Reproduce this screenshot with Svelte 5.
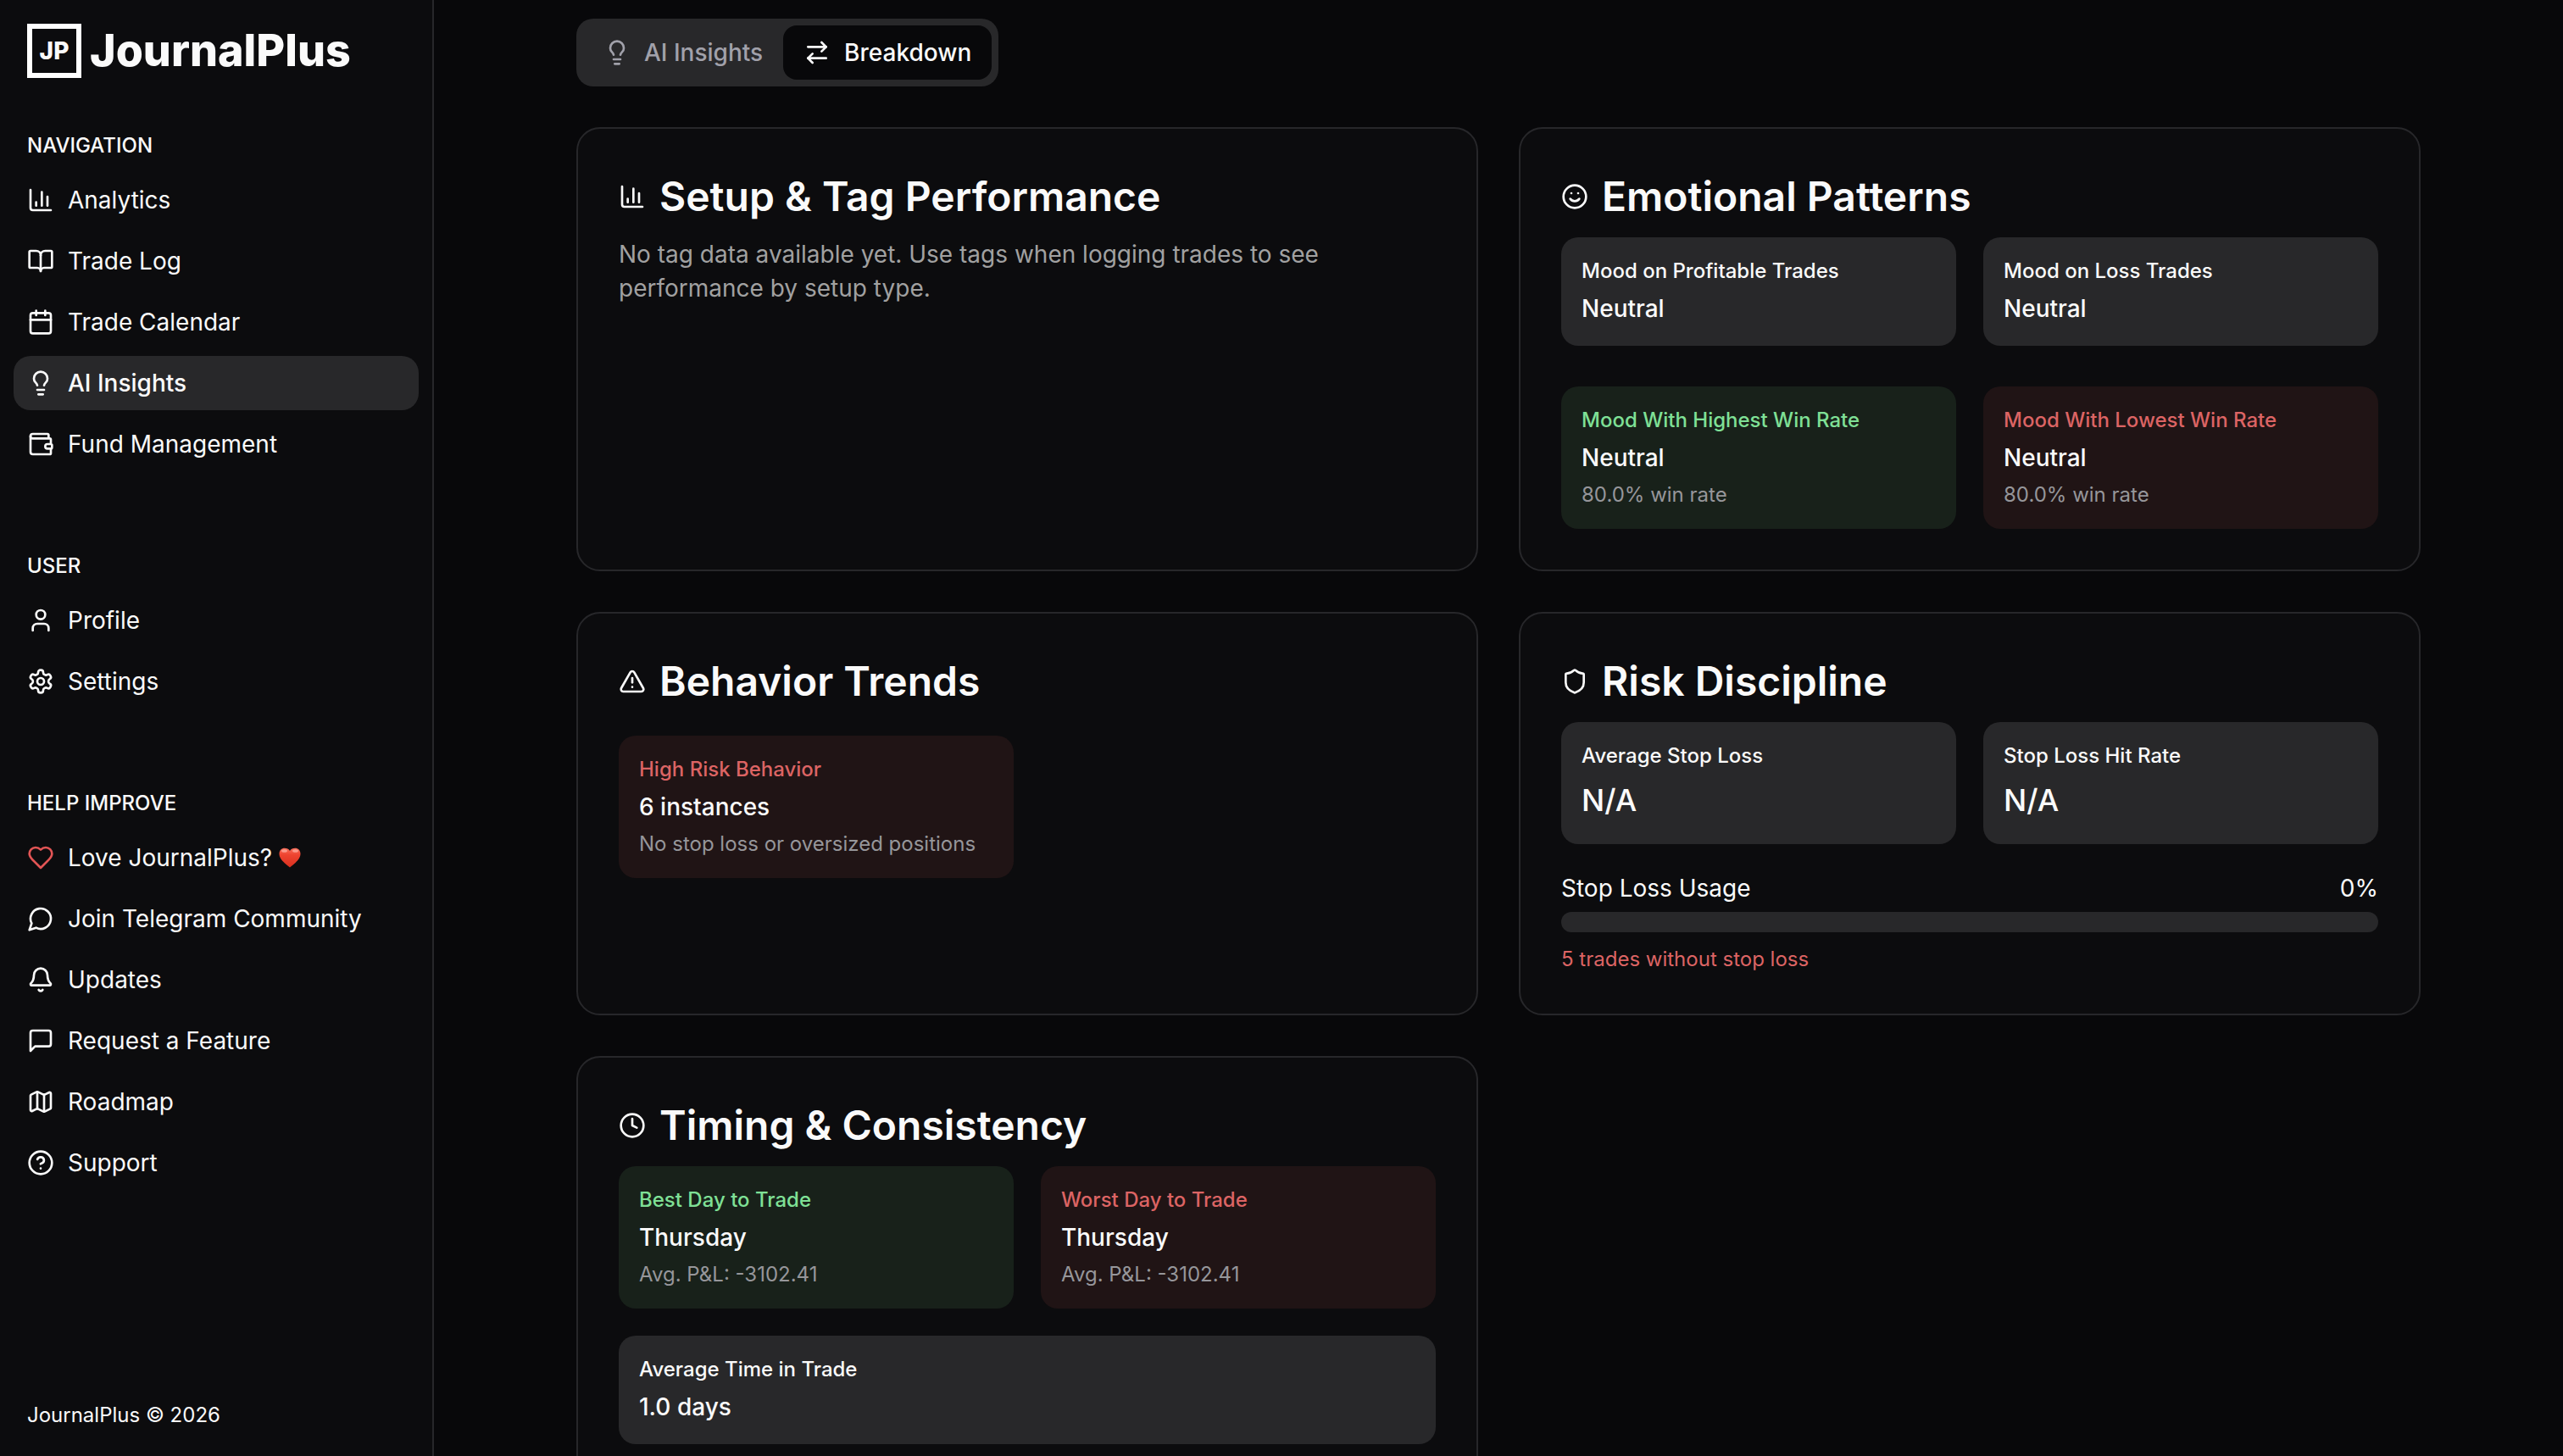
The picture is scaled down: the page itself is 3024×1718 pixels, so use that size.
<script>
  const icons = {
    chart: '<path d="M3 3v16a2 2 0 0 0 2 2h16"/><path d="M18 17V9"/><path d="M13 17V5"/><path d="M8 17v-3"/>',
    book: '<path d="M12 7v14"/><path d="M3 18a1 1 0 0 1-1-1V4a1 1 0 0 1 1-1h5a4 4 0 0 1 4 4 4 4 0 0 1 4-4h5a1 1 0 0 1 1 1v13a1 1 0 0 1-1 1h-6a3 3 0 0 0-3 3 3 3 0 0 0-3-3z"/>',
    calendar: '<path d="M8 2v4"/><path d="M16 2v4"/><rect width="18" height="18" x="3" y="4" rx="2"/><path d="M3 10h18"/>',
    bulb: '<path d="M15 14c.2-1 .7-1.7 1.5-2.5 1-.9 1.5-2.2 1.5-3.5A6 6 0 0 0 6 8c0 1 .2 2.2 1.5 3.5.7.7 1.3 1.5 1.5 2.5"/><path d="M9 18h6"/><path d="M10 22h4"/>',
    wallet: '<path d="M19 7V4a1 1 0 0 0-1-1H5a2 2 0 0 0 0 4h15a1 1 0 0 1 1 1v4h-3a2 2 0 0 0 0 4h3a1 1 0 0 0 1-1v-2a1 1 0 0 0-1-1"/><path d="M3 5v14a2 2 0 0 0 2 2h15a1 1 0 0 0 1-1v-4"/>',
    user: '<path d="M19 21v-2a4 4 0 0 0-4-4H9a4 4 0 0 0-4 4v2"/><circle cx="12" cy="7" r="4"/>',
    settings: '<path d="M12.22 2h-.44a2 2 0 0 0-2 2v.18a2 2 0 0 1-1 1.73l-.43.25a2 2 0 0 1-2 0l-.15-.08a2 2 0 0 0-2.73.73l-.22.38a2 2 0 0 0 .73 2.73l.15.1a2 2 0 0 1 1 1.72v.51a2 2 0 0 1-1 1.74l-.15.09a2 2 0 0 0-.73 2.73l.22.38a2 2 0 0 0 2.73.73l.15-.08a2 2 0 0 1 2 0l.43.25a2 2 0 0 1 1 1.73V20a2 2 0 0 0 2 2h.44a2 2 0 0 0 2-2v-.18a2 2 0 0 1 1-1.73l.43-.25a2 2 0 0 1 2 0l.15.08a2 2 0 0 0 2.73-.73l.22-.39a2 2 0 0 0-.73-2.73l-.15-.08a2 2 0 0 1-1-1.74v-.5a2 2 0 0 1 1-1.74l.15-.09a2 2 0 0 0 .73-2.73l-.22-.38a2 2 0 0 0-2.73-.73l-.15.08a2 2 0 0 1-2 0l-.43-.25a2 2 0 0 1-1-1.73V4a2 2 0 0 0-2-2z"/><circle cx="12" cy="12" r="3"/>',
    heart: '<path d="M19 14c1.49-1.46 3-3.21 3-5.5A5.5 5.5 0 0 0 16.5 3c-1.76 0-3 .5-4.5 2-1.5-1.5-2.74-2-4.5-2A5.5 5.5 0 0 0 2 8.5c0 2.3 1.5 4.05 3 5.5l7 7Z"/>',
    chat: '<path d="M7.9 20A9 9 0 1 0 4 16.1L2 22Z"/>',
    bell: '<path d="M10.268 21a2 2 0 0 0 3.464 0"/><path d="M3.262 15.326A1 1 0 0 0 4 17h16a1 1 0 0 0 .74-1.673C19.41 13.956 18 12.499 18 8A6 6 0 0 0 6 8c0 4.499-1.411 5.956-2.738 7.326"/>',
    message: '<path d="M21 15a2 2 0 0 1-2 2H7l-4 4V5a2 2 0 0 1 2-2h14a2 2 0 0 1 2 2z"/>',
    map: '<path d="M14.106 5.553a2 2 0 0 0 1.788 0l3.659-1.83A1 1 0 0 1 21 4.619v12.764a1 1 0 0 1-.553.894l-4.553 2.277a2 2 0 0 1-1.788 0l-4.212-2.106a2 2 0 0 0-1.788 0l-3.659 1.83A1 1 0 0 1 3 19.381V6.618a1 1 0 0 1 .553-.894l4.553-2.277a2 2 0 0 1 1.788 0z"/><path d="M15 5.764v15"/><path d="M9 3.236v15"/>',
    help: '<circle cx="12" cy="12" r="10"/><path d="M9.09 9a3 3 0 0 1 5.83 1c0 2-3 3-3 3"/><path d="M12 17h.01"/>',
    swap: '<path d="m16 3 4 4-4 4"/><path d="M20 7H4"/><path d="m8 21-4-4 4-4"/><path d="M4 17h16"/>',
    smile: '<circle cx="12" cy="12" r="10"/><path d="M8 14s1.5 2 4 2 4-2 4-2"/><path d="M9 9h.01"/><path d="M15 9h.01"/>',
    alert: '<path d="m21.73 18-8-14a2 2 0 0 0-3.48 0l-8 14A2 2 0 0 0 4 21h16a2 2 0 0 0 1.73-3"/><path d="M12 9v4"/><path d="M12 17h.01"/>',
    shield: '<path d="M20 13c0 5-3.5 7.5-7.66 8.95a1 1 0 0 1-.67-.01C7.5 20.5 4 18 4 13V6a1 1 0 0 1 1-1c2 0 4.5-1.2 6.24-2.72a1.17 1.17 0 0 1 1.52 0C14.51 3.81 17 5 19 5a1 1 0 0 1 1 1z"/>',
    clock: '<circle cx="12" cy="12" r="10"/><path d="M12 6v6l4 2"/>',
  };

  const sections = [
    {
      title: "NAVIGATION",
      items: [
        { icon: "chart", label: "Analytics" },
        { icon: "book", label: "Trade Log" },
        { icon: "calendar", label: "Trade Calendar" },
        { icon: "bulb", label: "AI Insights", active: true },
        { icon: "wallet", label: "Fund Management" },
      ],
    },
    {
      title: "USER",
      items: [
        { icon: "user", label: "Profile" },
        { icon: "settings", label: "Settings" },
      ],
    },
    {
      title: "HELP IMPROVE",
      items: [
        { icon: "heart", label: "Love JournalPlus?", love: true },
        { icon: "chat", label: "Join Telegram Community" },
        { icon: "bell", label: "Updates" },
        { icon: "message", label: "Request a Feature" },
        { icon: "map", label: "Roadmap" },
        { icon: "help", label: "Support" },
      ],
    },
  ];

  const tabs = [
    { id: "insights", icon: "bulb", label: "AI Insights" },
    { id: "breakdown", icon: "swap", label: "Breakdown" },
  ];

  let activeTab = $state("breakdown");
  let stopLossUsage = $state(0);
</script>

{#snippet icon(name)}
  <svg class="icon" viewBox="0 0 24 24" aria-hidden="true">{@html icons[name]}</svg>
{/snippet}

{#snippet heading(name, text)}
  <h2 class="card-title">{@render icon(name)}<span>{text}</span></h2>
{/snippet}

{#snippet stat(label, value, note = "", tone = "", large = false)}
  <div class="stat {tone}">
    <p class="stat-label">{label}</p>
    <p class="stat-value" class:large>{value}</p>
    {#if note}<p class="stat-note">{note}</p>{/if}
  </div>
{/snippet}

<div class="app">
  <aside class="sidebar">
    <a class="brand" href="/">
      <span class="brand-mark">JP</span>
      <span class="brand-name">JournalPlus</span>
    </a>

    <div class="sections">
      {#each sections as section}
        <nav class="section" aria-label={section.title}>
          <p class="section-title">{section.title}</p>
          {#each section.items as item}
            <a
              class="nav-item"
              class:active={item.active}
              class:love={item.love}
              href="#{item.icon}"
              aria-current={item.active ? "page" : undefined}
            >
              {@render icon(item.icon)}
              <span>{item.label}</span>
              {#if item.love}
                <svg class="heart" viewBox="0 0 26 24" aria-hidden="true">
                  <defs>
                    <linearGradient id="heart-fill" x1="0" y1="0" x2="0" y2="1">
                      <stop offset="0" stop-color="#f9705c" />
                      <stop offset="0.35" stop-color="#ee4430" />
                      <stop offset="1" stop-color="#d9301f" />
                    </linearGradient>
                  </defs>
                  <path
                    fill="url(#heart-fill)"
                    d="M13 23.5C9 20 .5 14.500 .5 7.500C.5 3.500 3.300 .8 6.800 .8C9.500 .8 11.800 2 13 4C14.200 2 16.500 .8 19.200 .8C22.700 .8 25.500 3.500 25.500 7.500C25.500 14.500 17 20 13 23.500Z"
                  />
                  <ellipse cx="6.500" cy="4" rx="3.500" ry="1.800" fill="#ffb3a6" opacity="0.7" />
                  <ellipse cx="19.500" cy="4" rx="3.500" ry="1.800" fill="#ffb3a6" opacity="0.7" />
                </svg>
              {/if}
            </a>
          {/each}
        </nav>
      {/each}
    </div>

    <p class="copyright">JournalPlus © 2026</p>
  </aside>

  <main class="main">
    <div class="content">
      <div class="tabs" role="tablist">
        {#each tabs as tab}
          <button
            class="tab"
            class:selected={activeTab === tab.id}
            type="button"
            role="tab"
            aria-selected={activeTab === tab.id}
            onclick={() => (activeTab = tab.id)}
          >
            {@render icon(tab.icon)}
            <span>{tab.label}</span>
          </button>
        {/each}
      </div>

      <div class="cards">
        <section class="card">
          {@render heading("chart", "Setup & Tag Performance")}
          <p class="empty">
            No tag data available yet. Use tags when logging trades to see performance by setup type.
          </p>
        </section>

        <section class="card">
          {@render heading("smile", "Emotional Patterns")}
          <div class="stats moods">
            {@render stat("Mood on Profitable Trades", "Neutral")}
            {@render stat("Mood on Loss Trades", "Neutral")}
            {@render stat("Mood With Highest Win Rate", "Neutral", "80.0% win rate", "good")}
            {@render stat("Mood With Lowest Win Rate", "Neutral", "80.0% win rate", "bad")}
          </div>
        </section>

        <section class="card">
          {@render heading("alert", "Behavior Trends")}
          <div class="stats behaviors">
            {@render stat("High Risk Behavior", "6 instances", "No stop loss or oversized positions", "bad")}
          </div>
        </section>

        <section class="card">
          {@render heading("shield", "Risk Discipline")}
          <div class="stats">
            {@render stat("Average Stop Loss", "N/A", "", "", true)}
            {@render stat("Stop Loss Hit Rate", "N/A", "", "", true)}
          </div>
          <div class="usage">
            <div class="usage-row">
              <span id="usage-label">Stop Loss Usage</span>
              <span>{stopLossUsage}%</span>
            </div>
            <div
              class="track"
              role="progressbar"
              aria-labelledby="usage-label"
              aria-valuenow={stopLossUsage}
              aria-valuemin="0"
              aria-valuemax="100"
            >
              <div class="fill" style="width: {stopLossUsage}%"></div>
            </div>
            <p class="usage-warning">5 trades without stop loss</p>
          </div>
        </section>

        <section class="card">
          {@render heading("clock", "Timing & Consistency")}
          <div class="stats">
            {@render stat("Best Day to Trade", "Thursday", "Avg. P&L: -3102.41", "good")}
            {@render stat("Worst Day to Trade", "Thursday", "Avg. P&L: -3102.41", "bad")}
            {@render stat("Average Time in Trade", "1.0 days", "", "wide")}
          </div>
        </section>
      </div>
    </div>
  </main>
</div>

<style>
  :global(body) {
    background: #08080a;
  }

  .app {
    --page: #08080a;
    --panel: #0c0c0e;
    --muted: #28282a;
    --line: #27272a;
    --text: #fafafa;
    --text-soft: #a1a1a1;
    --green: #7fe096;
    --red: #dc6464;

    display: flex;
    height: 100vh;
    overflow: hidden;
    background: var(--page);
    color: var(--text);
    font-family: Inter, "Liberation Sans", sans-serif;
    font-size: 28px;
    line-height: 40px;
  }

  p,
  h2 {
    margin: 0;
  }

  a {
    color: inherit;
    text-decoration: none;
  }

  .icon {
    width: 32px;
    height: 32px;
    flex: none;
    fill: none;
    stroke: currentColor;
    stroke-width: 2;
    stroke-linecap: round;
    stroke-linejoin: round;
  }

  .sidebar {
    box-sizing: border-box;
    width: 512px;
    flex: none;
    display: flex;
    flex-direction: column;
    padding: 28px 16px;
    background: var(--panel);
    border-right: 2px solid var(--line);
  }

  .brand {
    display: flex;
    align-items: center;
    gap: 10px;
    padding: 0 16px;
  }

  .brand-mark {
    box-sizing: border-box;
    width: 64px;
    height: 64px;
    display: grid;
    place-items: center;
    border: 6px solid #fff;
    font-size: 28px;
    font-weight: 800;
  }

  .brand-name {
    font-size: 52px;
    font-weight: 800;
    line-height: 64px;
  }

  .sections {
    display: flex;
    flex-direction: column;
    gap: 80px;
    margin-top: 48px;
  }

  .section {
    display: flex;
    flex-direction: column;
    gap: 8px;
  }

  .section-title {
    padding: 0 16px;
    margin-bottom: -8px;
    font-size: 24px;
    font-weight: 500;
    line-height: 64px;
  }

  .nav-item {
    display: flex;
    align-items: center;
    gap: 16px;
    padding: 12px 16px;
    border-radius: 20px;
  }

  .nav-item.active {
    background: var(--muted);
    font-weight: 500;
  }

  .nav-item.love .icon {
    color: #e25555;
  }

  .heart {
    width: 26px;
    height: 24px;
    margin-left: -8px;
  }

  .copyright {
    margin-top: auto;
    padding: 0 16px;
    font-size: 24px;
    line-height: 40px;
  }

  .main {
    flex: 1;
    min-width: 0;
    overflow-y: auto;
    scrollbar-width: none;
  }

  .content {
    box-sizing: border-box;
    max-width: 2304px;
    margin: 0 auto;
    padding: 22px 64px 48px;
  }

  .tabs {
    display: inline-flex;
    padding: 8px;
    background: var(--muted);
    border-radius: 20px;
    vertical-align: top;
  }

  .tab {
    display: flex;
    align-items: center;
    gap: 16px;
    padding: 12px 24px;
    border: 0;
    border-radius: 16px;
    background: transparent;
    color: #a1a1aa;
    font: inherit;
    font-weight: 500;
    cursor: pointer;
  }

  .tab.selected {
    background: var(--page);
    color: var(--text);
  }

  .cards {
    display: grid;
    grid-template-columns: repeat(2, minmax(0, 1fr));
    gap: 48px;
    margin-top: 48px;
  }

  .card {
    padding: 48px;
    background: var(--panel);
    border: 2px solid var(--line);
    border-radius: 28px;
  }

  .card-title {
    display: flex;
    align-items: center;
    gap: 16px;
    margin-bottom: 16px;
    font-size: 48px;
    font-weight: 600;
    line-height: 64px;
  }

  .empty {
    color: var(--text-soft);
  }

  .stats {
    display: grid;
    grid-template-columns: repeat(2, minmax(0, 1fr));
    gap: 32px;
  }

  .moods {
    row-gap: 48px;
  }

  .behaviors {
    margin-top: 32px;
  }

  .stat {
    display: flex;
    flex-direction: column;
    gap: 8px;
    padding: 24px;
    background: var(--muted);
    border-radius: 20px;
  }

  .stat.good {
    background: #18211a;
  }

  .stat.bad {
    background: #201415;
  }

  .stat.wide {
    grid-column: 1 / -1;
  }

  .stat-label,
  .stat-note {
    font-size: 24px;
    line-height: 32px;
  }

  .stat-label {
    font-weight: 500;
  }

  .good .stat-label {
    color: var(--green);
  }

  .bad .stat-label {
    color: var(--red);
  }

  .stat-value {
    font-weight: 500;
  }

  .stat-value.large {
    font-size: 36px;
    line-height: 56px;
  }

  .stat-note {
    color: #96969a;
  }

  .usage {
    margin-top: 32px;
  }

  .usage-row {
    display: flex;
    justify-content: space-between;
    margin-bottom: 8px;
  }

  .track {
    height: 24px;
    overflow: hidden;
    background: var(--muted);
    border-radius: 12px;
  }

  .fill {
    height: 100%;
    background: var(--text);
  }

  .usage-warning {
    margin-top: 16px;
    color: var(--red);
    font-size: 24px;
    line-height: 32px;
  }
</style>
